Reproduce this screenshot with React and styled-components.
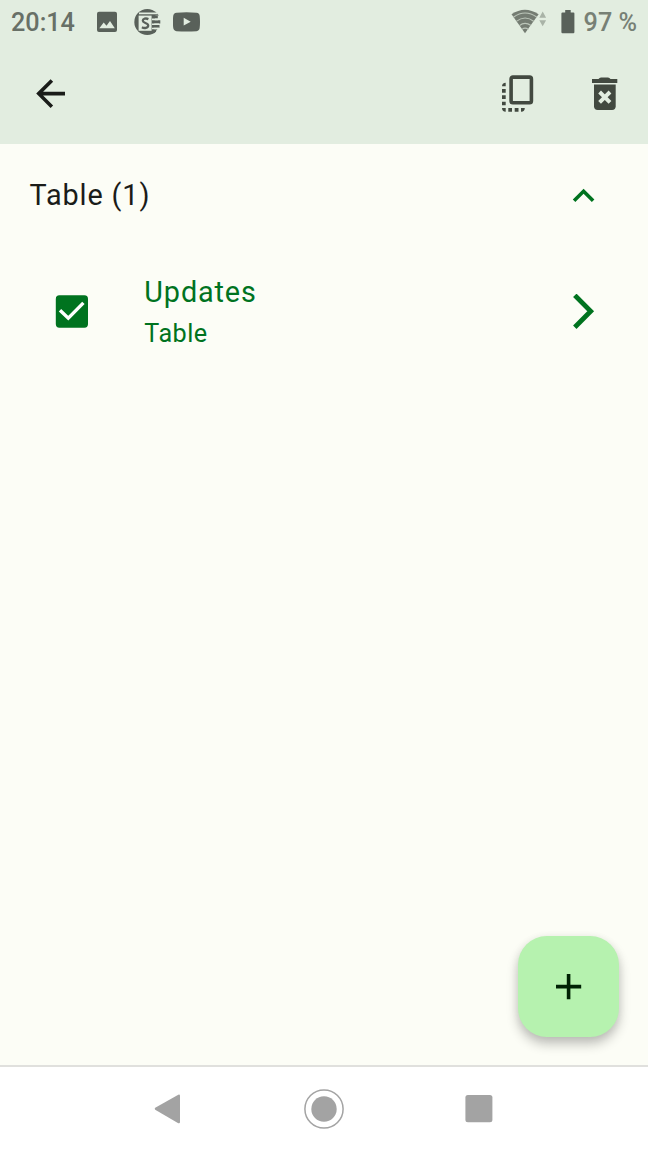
import React from "react";
import styled, { createGlobalStyle } from "styled-components";

const GlobalStyle = createGlobalStyle`
  * { box-sizing: border-box; }
  body { margin: 0; font-family: Roboto, "Liberation Sans", sans-serif; }
  svg { display: block; flex: none; }
`;

const Screen = styled.div`
  display: flex;
  flex-direction: column;
  width: 648px;
  height: 1152px;
  overflow: hidden;
  background: #fcfdf6;
`;

const StatusBar = styled.header`
  display: flex;
  align-items: center;
  justify-content: space-between;
  height: 44px;
  padding: 0 12px 0 11px;
  background: #e2ede0;
`;

const StatusGroup = styled.div`
  display: flex;
  align-items: center;
  height: 44px;
`;

const StatusText = styled.span`
  font-size: 25.2px;
  line-height: 44px;
  font-weight: 500;
  padding-top: 2px;
  width: ${(p) => p.$width};
  margin-left: ${(p) => p.$gap || "0"};
  white-space: pre;
  color: ${(p) => p.$color};
`;

const AppBar = styled.nav`
  display: flex;
  align-items: center;
  height: 100px;
  padding: 0 22px 3px 29px;
  background: #e2ede0;
`;

const IconButton = styled.button`
  display: flex;
  align-items: center;
  justify-content: center;
  padding: ${(p) => p.$pad || "0"};
  border: 0;
  background: none;
  color: ${(p) => p.$color};
  margin-left: ${(p) => p.$push || "0"};
`;

const Content = styled.main`
  flex: 1;
  display: flex;
  flex-direction: column;
`;

const SectionHeader = styled.div`
  display: flex;
  align-items: center;
  justify-content: space-between;
  height: 104px;
  padding: 0 43px 0 29.5px;
  color: #1a1c19;
`;

const Title = styled.div`
  font-size: 28.8px;
  line-height: 43px;
  letter-spacing: 0.88px;
  padding-bottom: 2px;
`;

const Subtitle = styled.div`
  font-size: 25.2px;
  line-height: 36px;
  letter-spacing: 0.45px;
`;

const ListItem = styled.div`
  display: flex;
  align-items: center;
  height: 127px;
  padding: 0 53.4px 0 55px;
  color: #00731f;
`;

const ItemText = styled.div`
  flex: 1;
  margin-left: 56.3px;
`;

const FabRow = styled.div`
  display: flex;
  justify-content: flex-end;
  margin-top: auto;
  padding: 0 29px 28.4px;
`;

const Fab = styled.button`
  display: flex;
  align-items: center;
  justify-content: center;
  width: 101px;
  height: 100.8px;
  padding: 0;
  border: 0;
  border-radius: 28.8px;
  background: #b6f2af;
  color: #002204;
  box-shadow: 0 7px 12px rgba(0, 0, 0, 0.24), 0 1px 8px rgba(0, 0, 0, 0.06);
`;

const NavigationBar = styled.footer`
  display: flex;
  align-items: center;
  height: 87px;
  padding: 0 155px 2px 154px;
  justify-content: space-between;
  border-top: 2px solid #e0e0dd;
  background: #fff;
`;

const PictureIcon = () => (
  <svg width="22" height="22" viewBox="0 0 22 22">
    <path fill="#59615a" fillRule="evenodd" d="M2 .7H18A2 2 0 0 1 20 2.7V19A2 2 0 0 1 18 21H2A2 2 0 0 1 0 19V2.7A2 2 0 0 1 2 .7ZM2.3 17.3H17.8L13 10.1L9.5 14.7L6.7 11.5Z" />
  </svg>
);

const NewsIcon = () => (
  <svg width="27" height="28" viewBox="0 0 27 28">
    <circle cx="13.3" cy="14" r="13" fill="#59615a" />
    <path fill="#e2ede0" d="M5 4.6H23.5V6.2H5ZM21.5 7.6H27V24H22.5L19.5 20.5Z" />
    <path fill="#59615a" d="M18 7.6H23.8V10.6H18ZM18 12.2H26.3V15.4H18ZM18 16.9H25.5V19.8H18ZM18 21.3H23.5L20.5 24.5H18Z" />
    <path fill="#e2ede0" d="M18 10.6H24V12.2H18ZM18 15.4H25V16.9H18ZM18 19.8H25V21.3H18Z" />
    <path fill="#e2ede0" d="M4.6 7.6H17.6V22.8H4.6Z" />
    <path fill="none" stroke="#59615a" strokeWidth="2.3" d="M14.4 11.1C11.9 9.9 8.8 10.6 8.8 12.7C8.8 15.3 14.2 14.7 14.2 17.6C14.2 20.1 10.2 20.6 7.9 19.3" />
  </svg>
);

const VideoIcon = () => (
  <svg width="28" height="20" viewBox="0 0 28 20">
    <path fill="#59615a" fillRule="evenodd" d="M3.5 .7Q13.5-.3 23.5 .7Q26.5 1 26.7 4Q27.3 10 26.7 15.5Q26.5 18.8 23.5 19.2Q13.5 20 3.5 19.2Q.5 18.8 .2 15.5Q-.4 10 .2 4Q.5 1 3.5 .7ZM10.7 5.8V13.6L17.7 9.7Z" />
  </svg>
);

const WifiIcon = () => (
  <svg width="36" height="26" viewBox="0 0 36 26">
    <path fill="#747c72" d="M.5 5.3Q13.8-4 27.6 5.3L14 24.2Z" />
    <path fill="none" stroke="#bcc6ba" strokeWidth="1.2" d="M2.4 8.2Q14-.2 26 8.2M5.3 12.4Q14.1 5.6 23 12.4M8.4 16.6Q14 12.2 20 16.6M11 20.4Q14 18 17.4 20.4" />
    <path fill="#a9b3a7" d="M28.3 8.7L31.7 2.5L35.1 8.7ZM28.3 11.2L31.7 17.2L35.1 11.2Z" />
  </svg>
);

const BatteryIcon = () => (
  <svg width="14" height="24" viewBox="0 0 14 24">
    <path fill="#59615a" d="M4.2 0H9.7V2.5H12.5Q13.4 2.5 13.4 3.5V22Q13.4 23.2 12.4 23.2H1.5Q.4 23.2.4 22V3.5Q.4 2.5 1.5 2.5H4.2Z" />
  </svg>
);

const BackIcon = () => (
  <svg width="43.2" height="43.2" viewBox="0 0 24 24" fill="currentColor">
    <path d="M20 11H7.83l5.59-5.59L12 4l-8 8 8 8 1.41-1.41L7.83 13H20z" />
  </svg>
);

const FlipToFrontIcon = () => (
  <svg width="32" height="37" viewBox="0 0 32 37" fill="currentColor">
    <rect x="9.1" y="2.1" width="20.3" height="25.7" rx="1.8" fill="none" stroke="currentColor" strokeWidth="3.6" />
    <path d="M0 11.3A3.7 3.7 0 0 1 3.7 7.7V11.3ZM0 14H3.7V17.7H0ZM0 20.3H3.7V24H0ZM0 26.7H3.7V30.3H0ZM0 33H3.7V36.7A3.7 3.7 0 0 1 0 33ZM6.3 33H10V36.7H6.3ZM12.7 33H16.5V36.7H12.7ZM19 33H22.8A3.7 3.7 0 0 1 19 36.7Z" />
  </svg>
);

const DeleteIcon = () => (
  <svg width="43" height="43" viewBox="0 0 43 43" fill="currentColor">
    <path d="M9 11.9V8.1H15.5Q16.5 6.4 18 6.4H25Q26.5 6.4 27.5 8.1H34.3V11.9Z" />
    <path d="M11 13.5H32.7V35.3Q32.7 39 29 39H14.7Q11 39 11 35.3Z" />
    <path d="M16.6 21L27 31.4M27 21L16.6 31.4" stroke="#e2ede0" strokeWidth="3.9" />
  </svg>
);

const CollapseIcon = () => (
  <svg width="43.2" height="43.2" viewBox="0 0 24 24" fill="#00731f">
    <path d="M12 8.2l-6 6 1.41 1.41L12 11.03l4.59 4.58L18 14.2z" />
  </svg>
);

const CheckboxIcon = () => (
  <svg width="33" height="33" viewBox="0 0 33 33">
    <rect x=".8" y=".3" width="32.2" height="32.4" rx="3.6" fill="#00731f" />
    <path d="M5 15.2L13.3 23.2L28.4 7.9" fill="none" stroke="#fff" strokeWidth="3.4" />
  </svg>
);

const OpenIcon = () => (
  <svg width="22" height="36" viewBox="0 0 22 36">
    <path d="M1.8 1.3L17.7 17.3L1.8 33.3" fill="none" stroke="currentColor" strokeWidth="4.8" />
  </svg>
);

const AddIcon = () => (
  <svg width="43.2" height="43.2" viewBox="0 0 24 24" fill="currentColor">
    <path d="M19 13h-6v6h-2v-6H5v-2h6V5h2v6h6z" />
  </svg>
);

const NavBackIcon = () => (
  <svg width="27" height="30" viewBox="0 0 27 30">
    <path fill="#a3a3a3" d="M1.2 13.8L24.3.7Q26 .2 26 2V28Q26 29.8 24.3 29.2L1.2 15.8Q.2 14.8 1.2 13.8Z" />
  </svg>
);

const NavHomeIcon = () => (
  <svg width="42" height="40" viewBox="-2 0 42 40">
    <circle cx="20" cy="20" r="19.1" fill="none" stroke="#a3a3a3" strokeWidth="1.5" />
    <circle cx="20" cy="20" r="12.7" fill="#a3a3a3" />
  </svg>
);

const NavRecentIcon = () => (
  <svg width="28" height="28" viewBox="0 0 28 28">
    <rect x=".4" y=".1" width="27" height="27.2" rx="2.5" fill="#a3a3a3" />
  </svg>
);

const StatusIcon = styled.span`
  margin-left: ${(p) => p.$gap};
`;

export default function App() {
  return (
    <Screen>
      <GlobalStyle />
      <StatusBar>
        <StatusGroup>
          <StatusText $width="64px" $color="#687067">20:14</StatusText>
          <StatusIcon $gap="22px"><PictureIcon /></StatusIcon>
          <StatusIcon $gap="15px"><NewsIcon /></StatusIcon>
          <StatusIcon $gap="12px"><VideoIcon /></StatusIcon>
        </StatusGroup>
        <StatusGroup>
          <StatusIcon $gap="0"><WifiIcon /></StatusIcon>
          <StatusIcon $gap="14.5px"><BatteryIcon /></StatusIcon>
          <StatusText $width="52.4px" $gap="8.5px" $color="#778075">97 %</StatusText>
        </StatusGroup>
      </StatusBar>
      <AppBar>
        <IconButton $color="#1a1c19" $pad="3px 0 0" aria-label="Back"><BackIcon /></IconButton>
        <IconButton $color="#424940" $push="auto" $pad="1px 0 0" aria-label="Flip to front"><FlipToFrontIcon /></IconButton>
        <IconButton $color="#424940" $push="49px" aria-label="Delete"><DeleteIcon /></IconButton>
      </AppBar>
      <Content>
        <SectionHeader>
          <Title>Table (1)</Title>
          <CollapseIcon />
        </SectionHeader>
        <ListItem>
          <CheckboxIcon />
          <ItemText>
            <Title>Updates</Title>
            <Subtitle>Table</Subtitle>
          </ItemText>
          <OpenIcon />
        </ListItem>
        <FabRow>
          <Fab aria-label="Add"><AddIcon /></Fab>
        </FabRow>
      </Content>
      <NavigationBar>
        <NavBackIcon />
        <NavHomeIcon />
        <NavRecentIcon />
      </NavigationBar>
    </Screen>
  );
}
